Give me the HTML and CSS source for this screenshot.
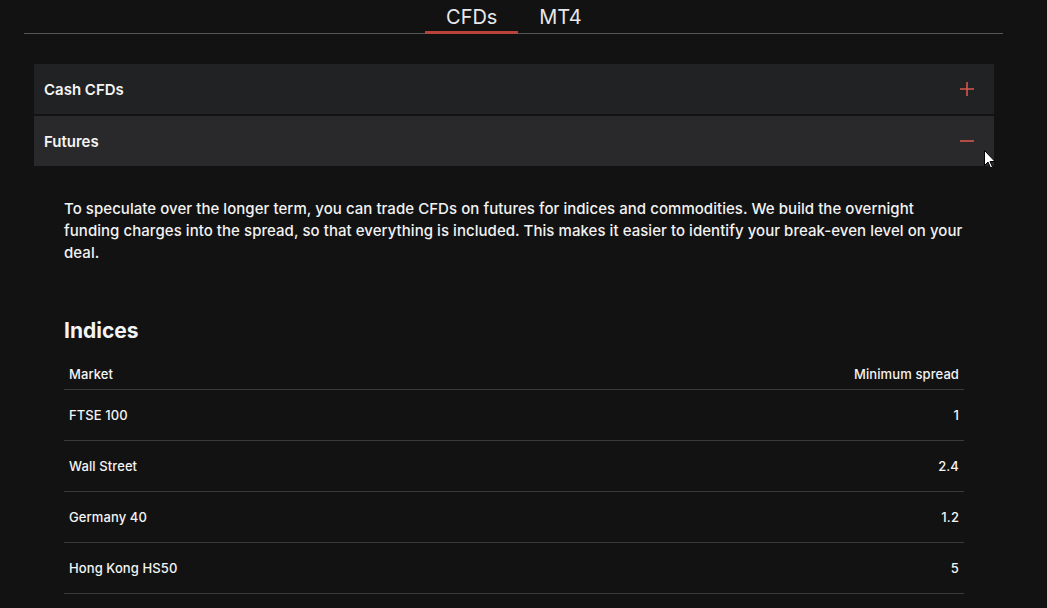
FILE: index.html
```html
<!DOCTYPE html>
<html>
<head>
<meta charset="utf-8">
<link rel="stylesheet" href="styles.css">
</head>
<body>
<div class="page">
  <nav class="tabs">
    <div class="tab active">CFDs</div>
    <div class="tab">MT4</div>
  </nav>
  <div class="accordion">
    <div class="acc-head closed">
      <span>Cash CFDs</span>
      <svg class="icon" width="16" height="16" viewBox="0 0 16 16"><path d="M1 8h14M8 1v14" stroke="#d4584b" stroke-width="1.6"/></svg>
    </div>
    <div class="acc-head open">
      <span>Futures</span>
      <svg class="icon" width="16" height="16" viewBox="0 0 16 16"><path d="M1 8h14" stroke="#d4584b" stroke-width="1.6"/></svg>
      <svg class="cursor" width="12" height="19" viewBox="0 0 12 19"><path d="M0.5 0.5v15l3.5-3.5 2.5 6 2-1-2.5-5.5h5z" fill="#fff" stroke="#000" stroke-width="1"/></svg>
    </div>
    <div class="acc-body">
      <p class="intro">To speculate over the longer term, you can trade CFDs on futures for indices and commodities. We build the overnight funding charges into the spread, so that everything is included. This makes it easier to identify your break-even level on your deal.</p>
      <h2 class="section-title">Indices</h2>
      <table class="spreads">
        <thead>
          <tr><th class="left">Market</th><th class="right">Minimum spread</th></tr>
        </thead>
        <tbody>
          <tr><td>FTSE 100</td><td class="right">1</td></tr>
          <tr><td>Wall Street</td><td class="right">2.4</td></tr>
          <tr><td>Germany 40</td><td class="right">1.2</td></tr>
          <tr><td>Hong Kong HS50</td><td class="right">5</td></tr>
        </tbody>
      </table>
    </div>
  </div>
</div>
</body>
</html>
```
FILE: styles.css
```css
html, body {
  margin: 0;
  padding: 0;
  background: #121212;
  color: #f4f4f4;
  font-family: Inter, "Liberation Sans", sans-serif;
}
.page {
  width: 1047px;
  height: 608px;
  overflow: hidden;
}
.tabs {
  margin: 0 44px 0 24px;
  border-bottom: 1px solid #555;
  display: flex;
  justify-content: center;
  height: 34px;
  box-sizing: border-box;
}
.tab {
  font-size: 20px;
  line-height: 20px;
  padding: 7px 20px 0;
  width: 93px;
  box-sizing: border-box;
  text-align: center;
  color: #e8e8ea;
  position: relative;
}
.tabs .tab:first-child { margin-left: -20px; }
.tab + .tab { width: auto; padding: 7px 0 0 21px; }
.tab.active::after {
  content: "";
  position: absolute;
  left: 0;
  right: 0;
  bottom: -1px;
  height: 3px;
  background: #b7433b;
}
.accordion {
  margin: 30px 53px 0 34px;
  display: flex;
  flex-direction: column;
  gap: 2px;
}
.acc-head {
  height: 50px;
  display: flex;
  align-items: center;
  justify-content: space-between;
  padding: 0 19px 0 10px;
  font-size: 15px;
  font-weight: 600;
  position: relative;
}
.acc-head.closed { background: #212224; }
.acc-head.open { background: #29292b; }
.icon { display: block; }
.cursor {
  position: absolute;
  left: 950px;
  top: 34px;
}
.acc-body {
  padding: 30px 30px 0;
}
.intro {
  margin: 0 -3px 0 0;
  font-size: 15px;
  font-weight: 500;
  letter-spacing: 0.05px;
  line-height: 22px;
  color: #f2f2f2;
}
.section-title {
  margin: 54px 0 0;
  font-size: 21px;
  font-weight: 700;
  line-height: 26px;
}
.spreads {
  width: 100%;
  border-collapse: collapse;
  margin-top: 15px;
  font-size: 13px;
  letter-spacing: 0.1px;
}
.spreads th {
  font-weight: 500;
  height: 30px;
  padding: 0 5px;
  vertical-align: top;
  padding-top: 7px;
  text-align: left;
  border-bottom: 1px solid #3a3a3a;
  box-sizing: border-box;
}
.spreads td {
  height: 50px;
  padding: 0 5px;
  border-bottom: 1px solid #3a3a3a;
  font-weight: 500;
}
.spreads .right { text-align: right; }
```
